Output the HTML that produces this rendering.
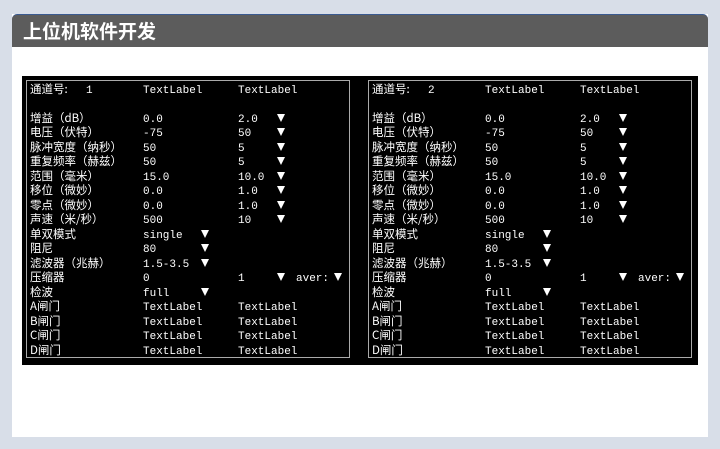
<!DOCTYPE html>
<html><head><meta charset="utf-8"><style>
*{margin:0;padding:0}
body{width:720px;height:449px;background:#d8dee8;position:relative;overflow:hidden;font-family:"Liberation Mono","Noto Sans CJK SC",monospace;}
.card{position:absolute;left:12px;top:14px;width:696px;height:423px;background:#fff;}
.hd{position:absolute;left:12px;top:14px;width:696px;height:33px;background:#5c5c5c;border-radius:5px 5px 0 0;border-top:1px solid #3a5a90;box-sizing:border-box;}
.hd span{position:absolute;left:11px;top:2px;color:#fff;font:bold 19px "Liberation Sans","Noto Sans CJK SC",sans-serif;}
.blk{position:absolute;left:22px;top:76px;width:676px;height:289px;background:#000;}
.pn{position:absolute;top:80px;width:322px;height:276px;border:1px solid #aaa;}
.r{position:absolute;height:14px;line-height:14px;font-size:11px;color:#fff;white-space:pre;padding-top:2px}
.c{font-family:"Noto Sans CJK SC",sans-serif;font-size:11.5px;padding-top:0}
.a{position:absolute;width:0;height:0;border-left:4px solid transparent;border-right:4px solid transparent;border-top:8px solid #fff;}
</style></head><body>
<div class="card"></div>
<div class="hd"><span>上位机软件开发</span></div>
<div class="blk"></div>
<div class="pn" style="left:26px"></div>
<div class="pn" style="left:368px"></div>

<!-- LEFT panel -->
<div class="r c" style="left:30px;top:82px">通道号:</div><div class="r" style="left:86px;top:82px">1</div>
<div class="r" style="left:143px;top:82px">TextLabel</div><div class="r" style="left:238px;top:82px">TextLabel</div>

<div class="r c" style="left:30px;top:111px">增益（dB）</div><div class="r" style="left:143px;top:111px">0.0</div><div class="r" style="left:238px;top:111px">2.0</div><div class="a" style="left:277px;top:114px"></div>
<div class="r c" style="left:30px;top:125px">电压（伏特）</div><div class="r" style="left:143px;top:125px">-75</div><div class="r" style="left:238px;top:125px">50</div><div class="a" style="left:277px;top:128px"></div>
<div class="r c" style="left:30px;top:140px">脉冲宽度（纳秒）</div><div class="r" style="left:143px;top:140px">50</div><div class="r" style="left:238px;top:140px">5</div><div class="a" style="left:277px;top:143px"></div>
<div class="r c" style="left:30px;top:154px">重复频率（赫兹）</div><div class="r" style="left:143px;top:154px">50</div><div class="r" style="left:238px;top:154px">5</div><div class="a" style="left:277px;top:157px"></div>
<div class="r c" style="left:30px;top:169px">范围（毫米）</div><div class="r" style="left:143px;top:169px">15.0</div><div class="r" style="left:238px;top:169px">10.0</div><div class="a" style="left:277px;top:172px"></div>
<div class="r c" style="left:30px;top:183px">移位（微妙）</div><div class="r" style="left:143px;top:183px">0.0</div><div class="r" style="left:238px;top:183px">1.0</div><div class="a" style="left:277px;top:186px"></div>
<div class="r c" style="left:30px;top:198px">零点（微妙）</div><div class="r" style="left:143px;top:198px">0.0</div><div class="r" style="left:238px;top:198px">1.0</div><div class="a" style="left:277px;top:201px"></div>
<div class="r c" style="left:30px;top:212px">声速（米/秒）</div><div class="r" style="left:143px;top:212px">500</div><div class="r" style="left:238px;top:212px">10</div><div class="a" style="left:277px;top:215px"></div>
<div class="r c" style="left:30px;top:227px">单双模式</div><div class="r" style="left:143px;top:227px">single</div><div class="a" style="left:201px;top:230px"></div>
<div class="r c" style="left:30px;top:241px">阻尼</div><div class="r" style="left:143px;top:241px">80</div><div class="a" style="left:201px;top:244px"></div>
<div class="r c" style="left:30px;top:256px">滤波器（兆赫）</div><div class="r" style="left:143px;top:256px">1.5-3.5</div><div class="a" style="left:201px;top:259px"></div>
<div class="r c" style="left:30px;top:270px">压缩器</div><div class="r" style="left:143px;top:270px">0</div><div class="r" style="left:238px;top:270px">1</div><div class="a" style="left:277px;top:273px"></div><div class="r" style="left:296px;top:270px">aver:</div><div class="a" style="left:334px;top:273px"></div>
<div class="r c" style="left:30px;top:285px">检波</div><div class="r" style="left:143px;top:285px">full</div><div class="a" style="left:201px;top:288px"></div>
<div class="r c" style="left:30px;top:299px">A闸门</div><div class="r" style="left:143px;top:299px">TextLabel</div><div class="r" style="left:238px;top:299px">TextLabel</div>
<div class="r c" style="left:30px;top:314px">B闸门</div><div class="r" style="left:143px;top:314px">TextLabel</div><div class="r" style="left:238px;top:314px">TextLabel</div>
<div class="r c" style="left:30px;top:328px">C闸门</div><div class="r" style="left:143px;top:328px">TextLabel</div><div class="r" style="left:238px;top:328px">TextLabel</div>
<div class="r c" style="left:30px;top:343px">D闸门</div><div class="r" style="left:143px;top:343px">TextLabel</div><div class="r" style="left:238px;top:343px">TextLabel</div>

<!-- RIGHT panel -->
<div class="r c" style="left:372px;top:82px">通道号:</div><div class="r" style="left:428px;top:82px">2</div>
<div class="r" style="left:485px;top:82px">TextLabel</div><div class="r" style="left:580px;top:82px">TextLabel</div>

<div class="r c" style="left:372px;top:111px">增益（dB）</div><div class="r" style="left:485px;top:111px">0.0</div><div class="r" style="left:580px;top:111px">2.0</div><div class="a" style="left:619px;top:114px"></div>
<div class="r c" style="left:372px;top:125px">电压（伏特）</div><div class="r" style="left:485px;top:125px">-75</div><div class="r" style="left:580px;top:125px">50</div><div class="a" style="left:619px;top:128px"></div>
<div class="r c" style="left:372px;top:140px">脉冲宽度（纳秒）</div><div class="r" style="left:485px;top:140px">50</div><div class="r" style="left:580px;top:140px">5</div><div class="a" style="left:619px;top:143px"></div>
<div class="r c" style="left:372px;top:154px">重复频率（赫兹）</div><div class="r" style="left:485px;top:154px">50</div><div class="r" style="left:580px;top:154px">5</div><div class="a" style="left:619px;top:157px"></div>
<div class="r c" style="left:372px;top:169px">范围（毫米）</div><div class="r" style="left:485px;top:169px">15.0</div><div class="r" style="left:580px;top:169px">10.0</div><div class="a" style="left:619px;top:172px"></div>
<div class="r c" style="left:372px;top:183px">移位（微妙）</div><div class="r" style="left:485px;top:183px">0.0</div><div class="r" style="left:580px;top:183px">1.0</div><div class="a" style="left:619px;top:186px"></div>
<div class="r c" style="left:372px;top:198px">零点（微妙）</div><div class="r" style="left:485px;top:198px">0.0</div><div class="r" style="left:580px;top:198px">1.0</div><div class="a" style="left:619px;top:201px"></div>
<div class="r c" style="left:372px;top:212px">声速（米/秒）</div><div class="r" style="left:485px;top:212px">500</div><div class="r" style="left:580px;top:212px">10</div><div class="a" style="left:619px;top:215px"></div>
<div class="r c" style="left:372px;top:227px">单双模式</div><div class="r" style="left:485px;top:227px">single</div><div class="a" style="left:543px;top:230px"></div>
<div class="r c" style="left:372px;top:241px">阻尼</div><div class="r" style="left:485px;top:241px">80</div><div class="a" style="left:543px;top:244px"></div>
<div class="r c" style="left:372px;top:256px">滤波器（兆赫）</div><div class="r" style="left:485px;top:256px">1.5-3.5</div><div class="a" style="left:543px;top:259px"></div>
<div class="r c" style="left:372px;top:270px">压缩器</div><div class="r" style="left:485px;top:270px">0</div><div class="r" style="left:580px;top:270px">1</div><div class="a" style="left:619px;top:273px"></div><div class="r" style="left:638px;top:270px">aver:</div><div class="a" style="left:676px;top:273px"></div>
<div class="r c" style="left:372px;top:285px">检波</div><div class="r" style="left:485px;top:285px">full</div><div class="a" style="left:543px;top:288px"></div>
<div class="r c" style="left:372px;top:299px">A闸门</div><div class="r" style="left:485px;top:299px">TextLabel</div><div class="r" style="left:580px;top:299px">TextLabel</div>
<div class="r c" style="left:372px;top:314px">B闸门</div><div class="r" style="left:485px;top:314px">TextLabel</div><div class="r" style="left:580px;top:314px">TextLabel</div>
<div class="r c" style="left:372px;top:328px">C闸门</div><div class="r" style="left:485px;top:328px">TextLabel</div><div class="r" style="left:580px;top:328px">TextLabel</div>
<div class="r c" style="left:372px;top:343px">D闸门</div><div class="r" style="left:485px;top:343px">TextLabel</div><div class="r" style="left:580px;top:343px">TextLabel</div>
</body></html>
